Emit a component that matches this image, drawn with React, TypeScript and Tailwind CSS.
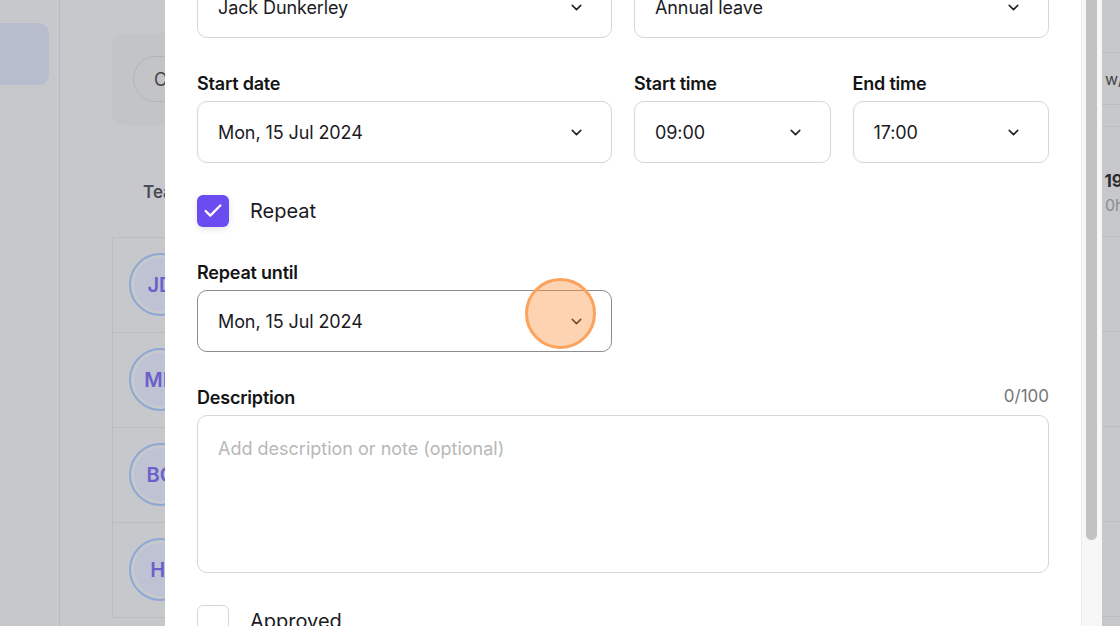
import { ChevronDown, Check } from "lucide-react";

const font = { fontFamily: "Inter, 'Noto Sans', sans-serif" };

function Select({ value, hover = false, children }: { value: string; hover?: boolean; children?: React.ReactNode }) {
  return (
    <div
      className={[
        "relative h-[62px] rounded-[10px] border bg-white flex items-center justify-between pl-5 pr-[26px]",
        hover ? "border-[#8d8d8d]" : "border-[#d6d6d6]",
      ].join(" ")}
    >
      <span className="text-[18px] text-[#1b1b1f] tracking-[-0.1px]">{value}</span>
      <ChevronDown className="w-[17px] h-[17px] text-[#222]" strokeWidth={2.2} />
      {children}
    </div>
  );
}

function Field({ label, right, className = "", children }: { label: string; right?: string; className?: string; children: React.ReactNode }) {
  return (
    <div className={["flex flex-col gap-[5px]", className].join(" ")}>
      <div className="h-[26px] flex items-center justify-between">
        <span className="text-[18px] font-semibold text-[#141414] tracking-[-0.2px]">{label}</span>
        {right && <span className="text-[17px] text-[#777]">{right}</span>}
      </div>
      {children}
    </div>
  );
}

const people = ["JD", "MK", "BC", "HI"];

export default function App() {
  return (
    <div className="relative w-[1120px] h-[626px] overflow-hidden flex bg-[#c7c8cc]" style={font}>
      {/* Sidebar */}
      <aside className="w-[60px] shrink-0 border-r border-[#b9babe] pt-[23px]">
        <div className="h-[62px] w-[49px] rounded-r-[10px] bg-[#b8bdcd]" />
      </aside>

      {/* Background page */}
      <main className="flex shrink-0 pl-[52px]">
        <div className="w-[950px] shrink-0 flex flex-col">
          <div className="mt-[33px] h-[92px] rounded-[10px] bg-[#c3c4c8] flex items-center pl-[21px]">
            <div className="h-[46px] px-5 rounded-full border border-[#b3b4b8] flex items-center text-[18px] text-[#444]">
              Calendar
            </div>
          </div>
          <div className="mt-[55px] pl-[31px] text-[17px] font-semibold text-[#4a4d55]">Team members</div>
          <div className="mt-[31px] border-l border-t border-[#bcbdc1]">
            {people.map((p) => (
              <div key={p} className="h-[95px] border-b border-[#bcbdc1] flex items-center pl-[16px]">
                <div className="w-[63px] h-[63px] rounded-full border-2 border-[#8ea8d6] p-[2px]">
                  <div className="w-full h-full rounded-full bg-[#bec2d2] border border-[#c9cbd3] flex items-center justify-center text-[20px] font-semibold text-[#6b5fcb]">
                    {p}
                  </div>
                </div>
              </div>
            ))}
          </div>
        </div>
        <div className="w-[200px] shrink-0 flex flex-col">
          <div className="h-[53px] border-b border-[#bcbdc1]" />
          <div className="h-[52px] border-b border-[#bcbdc1] flex items-center pl-[43px] text-[16px] text-[#444]">
            w/c
          </div>
          <div className="h-[22px] border-b border-[#bcbdc1]" />
          <div className="h-[110px] border-b border-[#bcbdc1] flex flex-col pt-[42px] pl-[12px]">
            <span className="text-[17px] leading-6 font-bold text-[#2a2b30]">Fri, 19</span>
            <span className="pl-[31px] text-[16px] leading-6 text-[#8a8b90]">0h</span>
          </div>
          {people.map((p) => (
            <div key={p} className="h-[95px] border-b border-[#bcbdc1]" />
          ))}
        </div>
      </main>

      {/* Modal */}
      <div className="absolute top-0 bottom-0 left-[165px] w-[937px] flex">
        <div className="w-[916px] bg-white px-8 flex flex-col gap-8">
          <div className="mt-[-55px] grid grid-cols-2 gap-[22px]">
            <Field label="Team member">
              <Select value="Jack Dunkerley" />
            </Field>
            <Field label="Leave type">
              <Select value="Annual leave" />
            </Field>
          </div>

          <div className="grid grid-cols-4 gap-[22px]">
            <Field label="Start date" className="col-span-2">
              <Select value="Mon, 15 Jul 2024" />
            </Field>
            <Field label="Start time">
              <Select value="09:00" />
            </Field>
            <Field label="End time">
              <Select value="17:00" />
            </Field>
          </div>

          <label className="flex items-center gap-[21px]">
            <span className="w-[32px] h-[32px] rounded-[6px] bg-[#6a4cf0] flex items-center justify-center shadow-[0_2px_6px_rgba(0,0,0,0.12)]">
              <Check className="w-[22px] h-[22px] text-white" strokeWidth={2.6} />
            </span>
            <span className="text-[20px] text-[#1b1b1f]">Repeat</span>
          </label>

          <div className="grid grid-cols-2 gap-[22px]">
            <Field label="Repeat until">
              <Select value="Mon, 15 Jul 2024" hover>
                <div className="absolute left-[327px] top-[-13px] w-[71px] h-[71px] rounded-full bg-[#fb923c]/40 border-[3px] border-[#fba25c]" />
              </Select>
            </Field>
          </div>

          <Field label="Description" right="0/100">
            <div className="h-[158px] rounded-[10px] border border-[#d6d6d6] px-5 pt-[19px] text-[18px] text-[#b8b8b8]">
              Add description or note (optional)
            </div>
          </Field>

          <label className="flex items-center gap-[21px]">
            <span className="w-[32px] h-[32px] rounded-[6px] border border-[#d6d6d6] bg-white" />
            <span className="text-[20px] text-[#1b1b1f]">Approved</span>
          </label>
        </div>

        {/* Scrollbar */}
        <div className="w-[21px] bg-[#f7f7f7] border-l border-[#ececec] pl-[4px]">
          <div className="w-[11px] h-[540px] rounded-b-full bg-[#c2c2c2]" />
        </div>
      </div>
    </div>
  );
}
